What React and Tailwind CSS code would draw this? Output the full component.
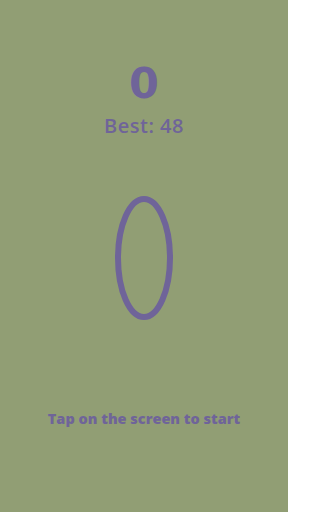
export default function App() {
  return (
    <div className="w-[288px] h-[512px] bg-[#919e74] flex flex-col items-center text-[#6f6499] font-['Open_Sans','Liberation_Sans',sans-serif]">
      <div className="mt-[62px] text-[43px] font-bold leading-none font-['DejaVu_Sans',sans-serif]">0</div>
      <div className="mt-[11px] text-[20px] font-semibold leading-none tracking-[0.5px]">Best: 48</div>
      <svg className="mt-[60px]" width="58" height="124" viewBox="0 0 58 124">
        <ellipse cx="29" cy="62" rx="26" ry="59" fill="none" stroke="#6f6499" strokeWidth="6" />
      </svg>
      <div className="mt-[92px] text-[14.5px] font-extrabold leading-none">Tap on the screen to start</div>
    </div>
  );
}
